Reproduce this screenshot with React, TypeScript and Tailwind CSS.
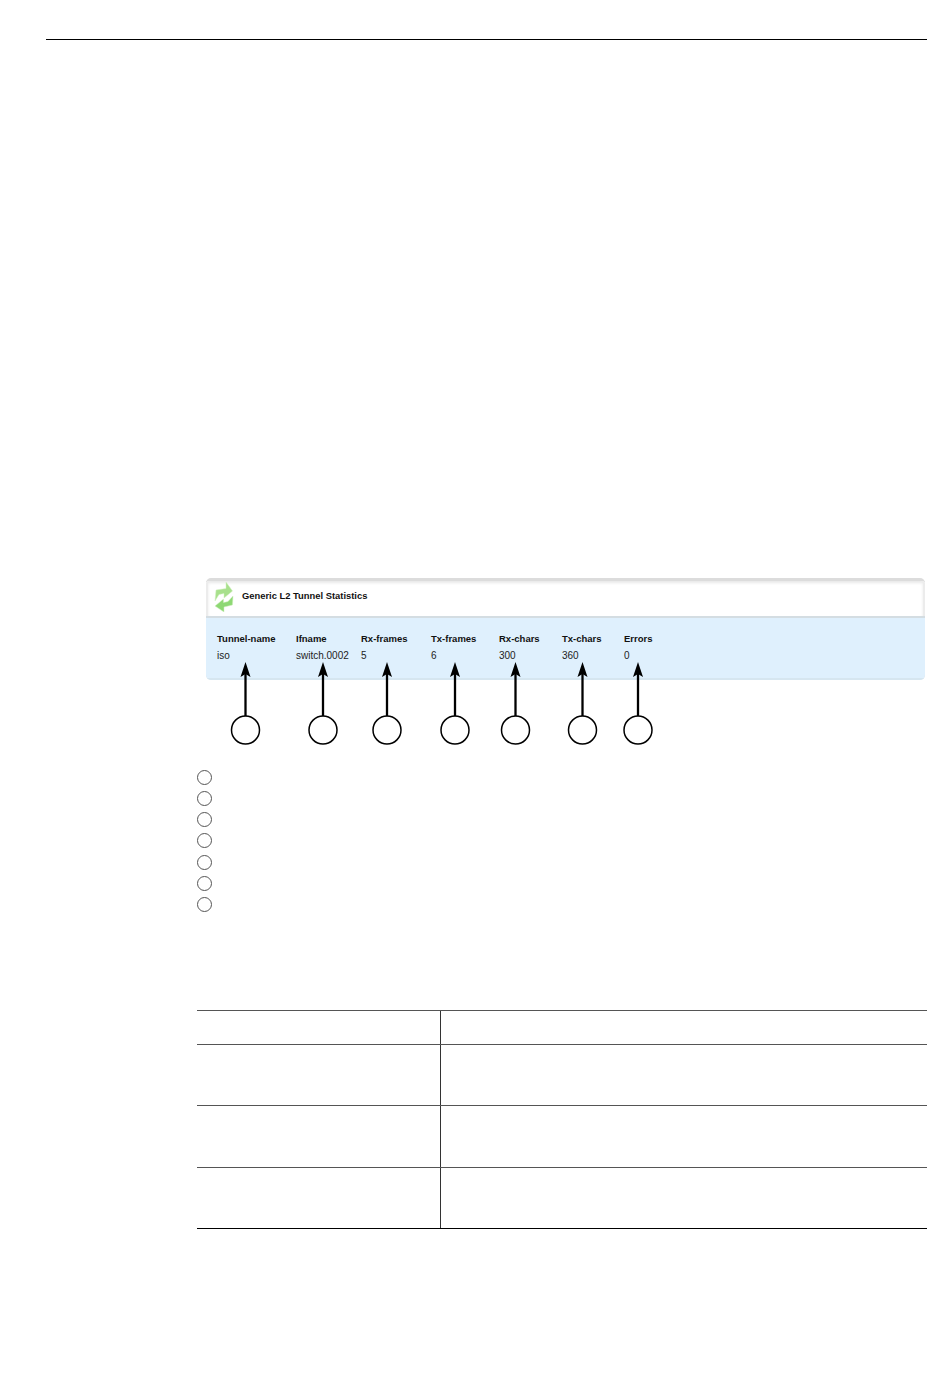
const columns = [
  { name: 'Tunnel-name', value: 'iso', width: 'w-[79px]' },
  { name: 'Ifname', value: 'switch.0002', width: 'w-[65px]' },
  { name: 'Rx-frames', value: '5', width: 'w-[70px]' },
  { name: 'Tx-frames', value: '6', width: 'w-[68px]' },
  { name: 'Rx-chars', value: '300', width: 'w-[63px]' },
  { name: 'Tx-chars', value: '360', width: 'w-[62px]' },
  { name: 'Errors', value: '0', width: 'w-[60px]' },
];

// arrow x positions, relative to the screenshot panel wrapper
const callouts = [245.5, 323, 387, 455, 515.5, 582.5, 638];

const rows = [
  { id: 'head', height: 'h-[34px]' },
  { id: 'one', height: 'h-[61px]' },
  { id: 'two', height: 'h-[62px]' },
  { id: 'three', height: 'h-[61px]' },
];

function TunnelIcon() {
  return (
    <svg width="21" height="30" viewBox="0 0 21 30" className="shrink-0">
      <path d="M2 19 L3 8 L13 6.500 L13 0 L19.500 9 L11 16 L11 11.500 L6 12.500 Z" fill="#a8e08c" stroke="#d2f0c2" strokeWidth="0.500" />
      <path d="M20 14 L19.500 23 L11 25 L11 30 L2 24 L10.500 17 L10.500 20.500 L15 19.500 Z" fill="#8ed874" stroke="#d2f0c2" strokeWidth="0.500" />
    </svg>
  );
}

export default function App() {
  return (
    <div className="min-h-[1387px] bg-white pt-[39px] font-['Liberation_Sans',sans-serif] text-black">
      <div className="ml-[46px] h-px w-[881px] bg-black" />

      {/* Screenshot panel with callouts */}
      <div className="relative mt-[538px] h-[170px]">
        <div className="ml-[206px] w-[719px] overflow-hidden rounded-[5px] border-t-[3px] border-[#dcdcdc] bg-[#e0e0e0]">
          <div className="flex h-[35px] items-center gap-[8px] border-x-2 border-[#ececec] bg-white pb-[4px] pl-[5px] text-[9.4px] font-bold text-[#111] shadow-[inset_0_2px_3px_#e8e8e8]">
            <TunnelIcon />
            <span>Generic L2 Tunnel Statistics</span>
          </div>
          <div className="h-[64px] border-y-[2px] border-t-[#d4dde2] border-b-[#d6e6f0] bg-[#dff0fd] pl-[11px] pt-[12px] text-[10px] leading-[17px] text-[#222]">
            <div className="flex">
              {columns.map((col) => (
                <div key={col.name} className={col.width}>
                  <div className="text-[9.5px] font-bold text-[#111]">{col.name}</div>
                  <div>{col.value}</div>
                </div>
              ))}
            </div>
          </div>
        </div>
        <svg width="950" height="170" viewBox="0 0 950 170" className="absolute left-0 top-0">
          {callouts.map((x) => (
            <g key={x}>
              <line x1={x} y1="93" x2={x} y2="138" stroke="#000" strokeWidth="2.300" />
              <path d={`M${x} 84 L${x - 5} 99 L${x} 96 L${x + 5} 99 Z`} fill="#000" />
              <circle cx={x} cy="152" r="14" fill="#fff" stroke="#000" strokeWidth="1.500" />
            </g>
          ))}
        </svg>
      </div>

      {/* Legend circles */}
      <div className="ml-[197px] mt-[21.500px] flex flex-col gap-[6.3px]">
        {columns.map((col) => (
          <div key={col.name} className="h-[15px] w-[15px] rounded-full border border-[#555]" />
        ))}
      </div>

      {/* Table */}
      <div className="ml-[197px] mt-[97.500px] w-[730px] border-b border-black">
        {rows.map((row) => (
          <div key={row.id} className={`${row.height} border-t border-[#555]`}>
            <div className="ml-[243px] h-full w-px bg-[#333]" />
          </div>
        ))}
      </div>
    </div>
  );
}
